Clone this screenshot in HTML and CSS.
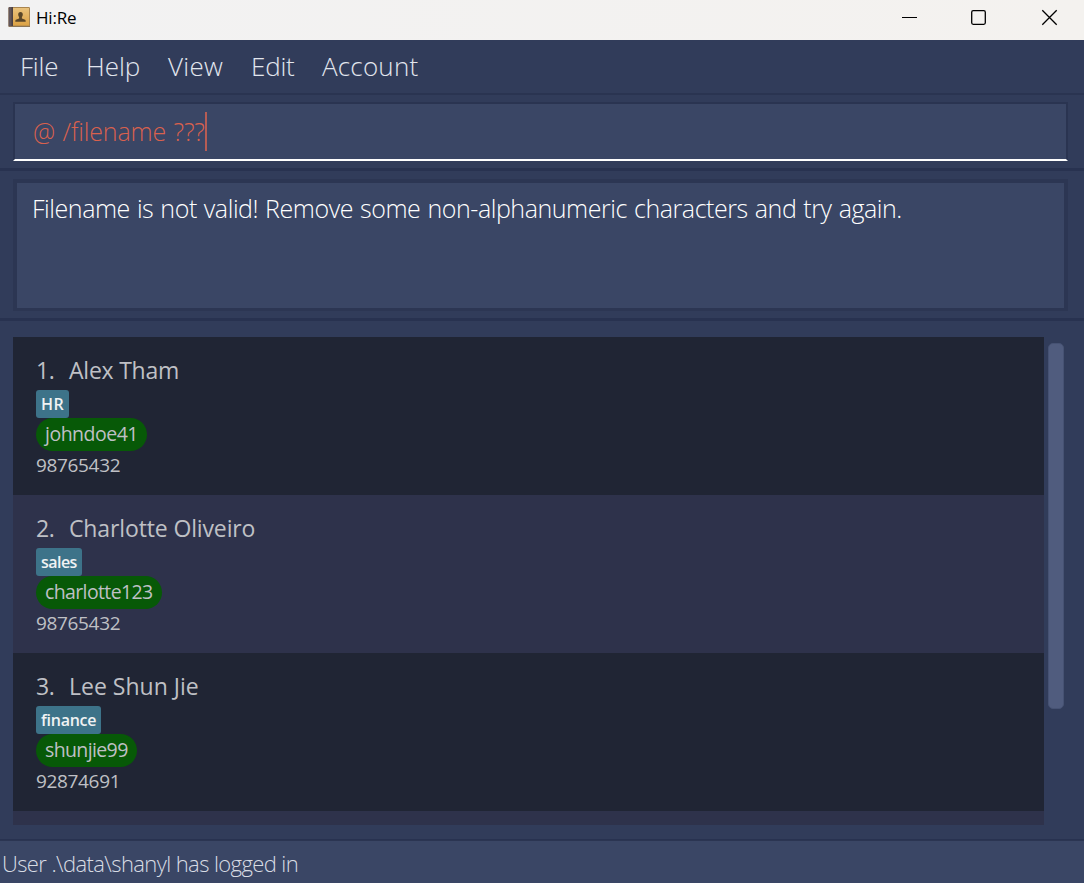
FILE: index.html
```html
<!DOCTYPE html>
<html lang="en">
<head>
<meta charset="utf-8">
<title>Hi:Re</title>
<link rel="stylesheet" href="styles.css">
</head>
<body>
<div class="window">
  <header class="titlebar">
    <svg class="app-icon" width="23" height="22" viewBox="0 0 23 22">
      <defs><linearGradient id="cover" x1="0" y1="0" x2="0" y2="1"><stop offset="0" stop-color="#e9c27c"/><stop offset="1" stop-color="#dca244"/></linearGradient></defs>
      <rect x=".5" y="1" width="21.500" height="20" rx="1.200" fill="#a9854f"/>
      <rect x=".5" y="1" width="4" height="20" rx="1" fill="#62565a"/>
      <rect x="3.500" y="1" width="1.500" height="20" fill="#4b4041"/>
      <rect x="5" y="2" width="16" height="17.500" fill="url(#cover)"/>
      <rect x="1" y="20" width="21" height="1" fill="#8b7556"/>
      <path d="M12.500 6c1.600 0 2.300 1.100 2.300 2.600 0 1.200-.5 2-.9 2.600v1.200l3.200 1.300c.5.300.6.900.6 2H7.300c0-1.100.1-1.700.6-2l3.200-1.300v-1.200c-.4-.6-.9-1.400-.9-2.600C10.200 7.100 10.900 6 12.500 6z" fill="#594629"/>
    </svg>
    <span class="title">Hi:Re</span>
    <svg class="controls" width="160" height="20" viewBox="0 0 160 20" fill="none" stroke="#000" stroke-width="1.300">
      <path d="M4 9.500h15" stroke-width="1"/>
      <rect x="73.700" y="2.700" width="13.600" height="13.600" rx="1.500"/>
      <path d="M144.300 2.300l14.400 14.400M158.700 2.300l-14.400 14.400"/>
    </svg>
  </header>
  <nav class="menubar">
    <span class="menu file">File</span><span class="menu help">Help</span><span class="menu view">View</span><span class="menu edit">Edit</span><span class="menu account">Account</span>
  </nav>
  <section class="command-pane">
    <div class="command-box"><span class="command-text">@ /filename ???</span><span class="caret"></span></div>
  </section>
  <section class="result-pane">
    <div class="result-box"><span class="result-text">Filename is not valid! Remove some non-alphanumeric characters and try again.</span></div>
  </section>
  <main class="list-pane">
    <div class="list">
      <article class="card">
        <h2 class="name"><span class="index">1.</span><span class="n1">Alex Tham</span></h2>
        <span class="tag t1">HR</span>
        <span class="user u1">johndoe41</span>
        <span class="phone">98765432</span>
      </article>
      <article class="card alt">
        <h2 class="name"><span class="index">2.</span><span class="n2">Charlotte Oliveiro</span></h2>
        <span class="tag t2">sales</span>
        <span class="user u2">charlotte123</span>
        <span class="phone">98765432</span>
      </article>
      <article class="card">
        <h2 class="name"><span class="index">3.</span><span class="n3">Lee Shun Jie</span></h2>
        <span class="tag t3">finance</span>
        <span class="user u3">shunjie99</span>
        <span class="phone">92874691</span>
      </article>
      <div class="card alt peek"></div>
    </div>
    <div class="scroll-thumb"></div>
  </main>
  <footer class="status"><span class="status-text">User .\data\shanyl has logged in</span></footer>
</div>
</body>
</html>
```
FILE: styles.css
```css
* { box-sizing: border-box; }
body { margin: 0; background: #313c5a; font-family: "Open Sans", "Noto Sans", sans-serif; }
.window { width: 1084px; height: 883px; display: flex; flex-direction: column; overflow: hidden; white-space: nowrap; background: #313c5a; }
.titlebar { height: 40px; flex: none; display: flex; align-items: flex-start; padding: 6px 22px 0 8px; background: linear-gradient(90deg, #f2f2f2, #f4f2ef); color: #000; }
.title { margin-left: 5px; font-size: 17px; line-height: 24px; letter-spacing: -.2px; }
.controls { margin: 2px 4px 0 auto; }
.menubar { height: 55px; flex: none; display: flex; padding: 0 0 2px 20px; border-bottom: 2px solid #2a3451; color: #e2e6ee; font-size: 26px; font-weight: 300; line-height: 52px; }
.menu.file { width: 66px; letter-spacing: -.2px; }
.menu.help { width: 82px; }
.menu.view { width: 83px; letter-spacing: .3px; }
.menu.edit { width: 71px; letter-spacing: -.2px; }
.menu.account { letter-spacing: .2px; }
.command-pane { height: 76px; flex: none; padding: 7px 16px 0 13px; border-bottom: 3px solid #283250; }
.command-box { height: 59px; display: flex; align-items: flex-start; padding: 8px 0 0 18px; background: #3a4665; border: 2px solid #2a3451; border-bottom: 2px solid #fff; }
.command-text { margin-top: -1px; color: #d9614e; font-size: 25px; font-weight: 300; line-height: 40px; letter-spacing: -.15px; word-spacing: 1.200px; }
.caret { width: 2px; height: 39px; background: #b65c54; }
.result-pane { height: 150px; flex: none; padding: 8px 16px 0 13px; border-bottom: 3px solid #283250; }
.result-box { height: 132px; padding: 5px 0 0 15px; background: #3a4665; border: 4px solid #2c3653; border-bottom-width: 3px; }
.result-text { color: #fff; font-size: 25px; font-weight: 300; line-height: 40px; letter-spacing: -.44px; word-spacing: .960px; }
.list-pane { height: 519px; flex: none; display: flex; padding: 16px 0 0 13px; border-bottom: 1px solid #283250; }
.list { width: 1031px; height: 488px; overflow: hidden; }
.card { height: 158px; display: flex; flex-direction: column; align-items: flex-start; padding: 17px 0 0 23px; background: #202534; color: #bfc0c5; }
.card.alt { background: #2e324b; }
.name { margin: 0; height: 36px; display: flex; font-size: 23px; font-weight: 400; line-height: 32px; }
.index { width: 33px; letter-spacing: -.3px; }
.n1 { letter-spacing: -.23px; }
.n2 { letter-spacing: -.13px; }
.tag { height: 28px; padding: 0 5px; border-radius: 3px; background: #3d7389; color: #f0f2f3; font-size: 16px; font-weight: 600; line-height: 28px; }
.t1 { letter-spacing: .4px; }
.t2 { letter-spacing: -.55px; }
.t3 { letter-spacing: -.25px; }
.user { height: 33px; padding: 0 9px; border-radius: 17px; background: #075907; font-size: 19.500px; line-height: 32px; letter-spacing: -.5px; }
.u2, .u3 { letter-spacing: -.62px; }
.phone { font-size: 19px; line-height: 29px; letter-spacing: -.34px; }
.scroll-thumb { width: 16px; height: 366px; margin: 6px 0 0 4px; border: 1px solid #465273; border-radius: 5px; background: #505c7e; }
.status { height: 43px; flex: none; padding-left: 2px; border-top: 1px solid #2b3552; background: #3a4665; color: #d8dce4; font-size: 22px; font-weight: 300; line-height: 44px; letter-spacing: -.6px; }
```
